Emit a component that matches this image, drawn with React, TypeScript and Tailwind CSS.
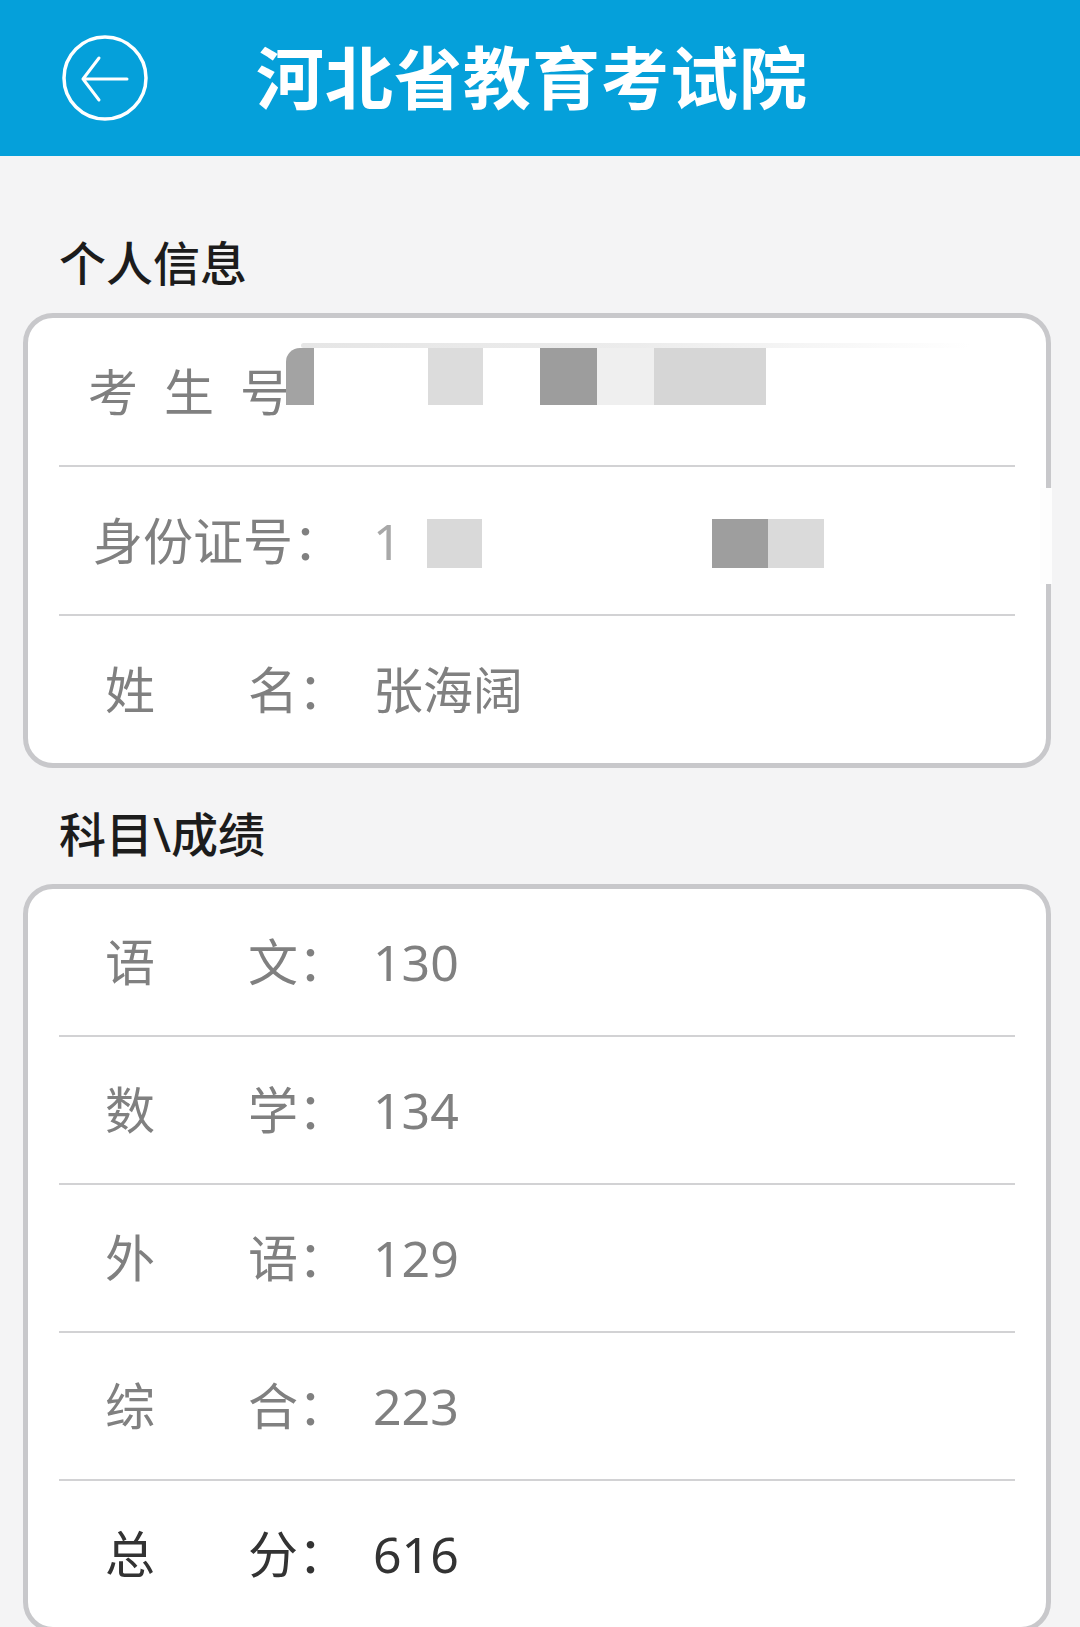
import React from "react";

interface Row {
  label: string[];
  value: string;
  dark?: boolean;
}

const subjects: Row[] = [
  { label: ["语", "文"], value: "130" },
  { label: ["数", "学"], value: "134" },
  { label: ["外", "语"], value: "129" },
  { label: ["综", "合"], value: "223" },
  { label: ["总", "分"], value: "616", dark: true },
];

function BackIcon() {
  return (
    <svg width="88" height="88" viewBox="0 0 88 88" fill="none" className="shrink-0">
      <circle cx="44" cy="44" r="41" stroke="white" strokeWidth="3.5" />
      <path
        d="M66 45H22M38 24L22 45L38 66"
        stroke="white"
        strokeWidth="3"
        strokeLinecap="round"
        strokeLinejoin="round"
      />
    </svg>
  );
}

function Label({ chars, colon = true }: { chars: string[]; colon?: boolean }) {
  const inner =
    chars.length === 2
      ? "ml-[12px] flex w-[193px] justify-between"
      : chars.length === 3
      ? "ml-[-5px] flex w-[202px] justify-between"
      : "flex w-[200px] justify-between";
  return (
    <div className="flex w-[280px] shrink-0 items-center">
      <div className={inner}>
        {chars.map((c, i) => (
          <span key={i}>{c}</span>
        ))}
      </div>
      {colon && <span>：</span>}
    </div>
  );
}

function Divider() {
  return <div className="mx-[31px] h-[2px] bg-[#d2d2d4]" />;
}

function SectionTitle({ children, top }: { children: React.ReactNode; top: string }) {
  return (
    <div className={`${top} pb-[27px] pl-[59px]`}>
      <h2 className="text-[47px] leading-[46px] font-medium text-[#1c1c1c]">{children}</h2>
    </div>
  );
}

export default function App() {
  return (
    <div className="min-h-[1627px] w-[1080px] overflow-hidden bg-[#f4f4f5] font-['Noto_Sans','Noto_Sans_CJK_SC',sans-serif]">
      {/* Header */}
      <header className="flex h-[156px] items-center bg-[#05a0da] pl-[61px]">
        <BackIcon />
        <h1 className="ml-[107px] text-[68px] leading-none font-bold tracking-[1px] text-white">
          河北省教育考试院
        </h1>
      </header>

      <SectionTitle top="pt-[84px]">个人信息</SectionTitle>

      {/* Personal info card */}
      <div className="relative ml-[23px] mr-[29px] rounded-[30px] border-[5px] border-[#c8c8cb] bg-white text-[50px] leading-none text-[#808080]">
        <div className="relative flex h-[147px] items-center pl-[65px]">
          <Label chars={["考", "生", "号"]} colon={false} />
          {/* redacted number */}
          <div className="absolute top-[25px] left-[258px] flex flex-col">
            <div className="ml-[15px] h-[5px] w-[670px] rounded-full bg-gradient-to-r from-[#e6e6e6] via-[#ececec] to-transparent" />
            <div className="flex h-[57px]">
              <div className="w-[28px] rounded-tl-[14px] bg-[#a3a3a3]" />
              <div className="w-[114px] bg-white" />
              <div className="w-[55px] bg-[#dcdcdc]" />
              <div className="w-[57px] bg-white" />
              <div className="w-[57px] bg-[#9d9d9d]" />
              <div className="w-[57px] bg-[#efefef]" />
              <div className="w-[112px] bg-[#d6d6d6]" />
            </div>
          </div>
        </div>
        <Divider />
        <div className="flex h-[147px] items-center pl-[65px]">
          <Label chars={["身", "份", "证", "号"]} />
          <span className="text-[#a8a8a8]">1</span>
          <div className="ml-[25px] flex h-[49px] translate-y-[3px]">
            <div className="w-[55px] bg-[#d9d9d9]" />
            <div className="w-[230px]" />
            <div className="w-[56px] bg-[#9e9e9e]" />
            <div className="w-[56px] bg-[#dadada]" />
          </div>
        </div>
        <Divider />
        <div className="flex h-[147px] items-center pl-[65px]">
          <Label chars={["姓", "名"]} />
          <span>张海阔</span>
        </div>
        {/* blur artifact over the right border */}
        <div className="absolute top-[170px] right-[-6px] h-[96px] w-[12px] bg-[#fdfdfd]" />
      </div>

      <SectionTitle top="pt-[43px]">科目\成绩</SectionTitle>

      {/* Scores card */}
      <div className="ml-[23px] mr-[29px] rounded-[30px] border-[5px] border-[#c8c8cb] bg-white text-[50px] leading-none">
        {subjects.map((s, i) => (
          <div key={s.label.join("")}>
            {i > 0 && <Divider />}
            <div
              className={`flex h-[146px] items-center pl-[65px] ${
                s.dark ? "text-[#333333]" : "text-[#808080]"
              }`}
            >
              <Label chars={s.label} />
              <span>{s.value}</span>
            </div>
          </div>
        ))}
      </div>
    </div>
  );
}
